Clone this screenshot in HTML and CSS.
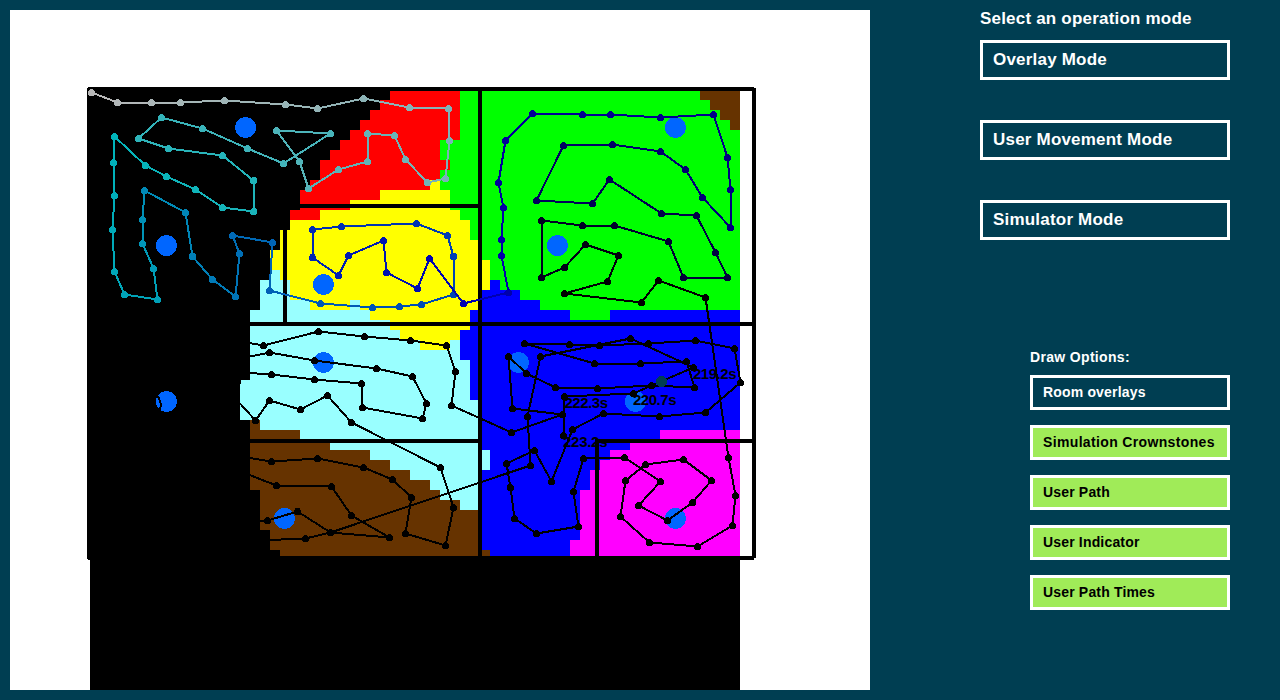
FILE: index.html
```html
<!DOCTYPE html>
<html lang="en">
<head>
<meta charset="utf-8">
<title>Simulator</title>
<link rel="stylesheet" href="styles.css">
</head>
<body>
<main class="app">
  <svg class="map" viewBox="10 10 860 680" width="860" height="680">
    <g class="rooms">
      <path class="void" d="M90 90H740V690H90Z"/>
      <path class="red" d="M390 90H460V140H440V160H450V170H440V180H430V190H380V200H350V210H320V220H290V210H300V190H310V180H320V160H330V150H340V140H350V130H360V120H370V110H380V100H390Z"/>
      <path class="green" d="M460 90H740V310H610V320H570V310H540V300H520V290H500V280H490V260H480V240H470V220H460V210H450V190H440V170H450V160H440V140H460Z"/>
      <path class="brown" d="M700 90H740V130H730V120H720V110H710V100H700Z"/>
      <path class="blue" d="M480 290H490V280H500V290H520V300H540V310H570V320H610V310H740V557H480V400H470V360H460V330H470V310H480Z"/>
      <path class="yellow" d="M430 180H440V190H450V210H460V220H470V240H480V260H490V290H480V310H470V330H460V340H450V350H420V340H400V330H390V320H370V310H360V300H350V310H310V300H290V280H280V270H270V250H280V230H290V220H320V210H350V200H380V190H430Z"/>
      <path class="cyan" d="M270 270H280V280H290V300H310V310H350V300H360V310H370V320H390V330H400V340H420V350H450V340H460V360H470V400H480V557H250V420H240V380H250V310H260V280H270Z"/>
      <path class="brown" d="M250 420H260V430H300V440H330V450H370V460H390V470H410V480H430V490H440V500H460V510H480V557H280V550H270V530H260V490H250Z"/>
      <path class="void" d="M240 490H260V530H270V550H280V557H240Z"/>
      <path class="magenta" d="M660 430H740V557H570V540H580V490H590V470H600V460H610V450H630V440H660Z"/>
      <path class="cyan" d="M480 450H490V470H480Z"/>
      <path class="brown" d="M480 550H490V557H480Z"/>
    </g>
    <path class="walls" d="M88 89H754M89 88V559M88 558H754M754 88V558M480 89V558M285 206H480M285 206V324M89 324H754M89 441H480M597 439V558M597 441H754"/>
    <g class="crownstones">
      <circle cx="245.5" cy="127.5" r="10.5"/><circle cx="675.5" cy="127.5" r="10.5"/>
      <circle cx="166.5" cy="245.5" r="10.5"/><circle cx="557.5" cy="245.5" r="10.5"/>
      <circle cx="323.5" cy="284.5" r="10.5"/><circle cx="323.5" cy="362.5" r="10.5"/>
      <circle cx="518.5" cy="362.5" r="10.5"/><circle cx="635.5" cy="401.5" r="10.5"/>
      <circle cx="166.5" cy="401.5" r="10.5"/><circle cx="284.5" cy="518.5" r="10.5"/>
      <circle cx="675.5" cy="518.5" r="10.5"/>
    </g>
    <path class="hidden-path" d="M158 396L161 404L160 411"/>
    <g id="trail" class="trail"></g>
    <circle class="indicator" cx="661.5" cy="381.5" r="5.5"/>
    <g class="times">
      <text x="693" y="379" textLength="43.5">219.2s</text>
      <text x="633" y="405" textLength="43.5">220.7s</text>
      <text x="564.5" y="408" textLength="43.5">222.3s</text>
      <text x="563" y="447" textLength="44.5">223.2s</text>
    </g>
  </svg>
  <aside class="sidebar">
    <h1 class="title">Select an operation mode</h1>
    <div class="modes">
      <button class="button mode">Overlay Mode</button>
      <button class="button mode">User Movement Mode</button>
      <button class="button mode">Simulator Mode</button>
    </div>
    <section class="options">
      <h2 class="subtitle">Draw Options:</h2>
      <button class="button option">Room overlays</button>
      <button class="button option active wide">Simulation Crownstones</button>
      <button class="button option active">User Path</button>
      <button class="button option active">User Indicator</button>
      <button class="button option active">User Path Times</button>
    </section>
  </aside>
</main>
<script src="trail.js"></script>
</body>
</html>
```
FILE: styles.css
```css
body {
  margin: 0;
  background: #003e52;
  font-family: "Liberation Sans", Arial, sans-serif;
  font-weight: bold;
}

.app {
  box-sizing: border-box;
  display: flex;
  gap: 110px;
  width: 1280px;
  height: 700px;
  padding: 10px;
  overflow: hidden;
}

.map {
  flex: none;
  background: #fff;
  shape-rendering: crispEdges;
}

.void { fill: #000; }
.red { fill: #f00; }
.green { fill: #0f0; }
.blue { fill: #00f; }
.yellow { fill: #ff0; }
.cyan { fill: #9ff; }
.brown { fill: #630; }
.magenta { fill: #f0f; }

.walls {
  fill: none;
  stroke: #000;
  stroke-width: 4;
}

.crownstones { fill: #06f; }
.indicator { fill: #003e52; }

.trail line { stroke-width: 2; }
.hidden-path { fill: none; stroke: #000; stroke-width: 2; }

.times {
  font-size: 15px;
  fill: #000;
}

.sidebar {
  width: 250px;
  color: #fff;
}

.title {
  margin: 0;
  height: 30px;
  font-size: 17px;
  line-height: 17px;
  letter-spacing: 0.2px;
  white-space: nowrap;
}

.modes {
  display: flex;
  flex-direction: column;
  gap: 40px;
}

.button {
  box-sizing: border-box;
  display: block;
  padding: 0 10px;
  border: 3px solid #fff;
  border-radius: 0;
  background: #003e52;
  color: #fff;
  font-family: inherit;
  font-weight: bold;
  text-align: left;
  white-space: nowrap;
}

.mode {
  height: 40px;
  font-size: 17px;
  letter-spacing: 0.2px;
}

.options {
  display: flex;
  flex-direction: column;
  gap: 15px;
  margin: 110px 0 0 50px;
}

.subtitle {
  margin: 0 0 -5px;
  font-size: 14px;
  line-height: 15px;
  letter-spacing: 0.33px;
}

.option {
  height: 35px;
  padding-bottom: 2px;
  font-size: 14px;
  letter-spacing: 0.17px;
}

.wide { letter-spacing: 0.35px; }

.active {
  background: #a0eb58;
  color: #000;
}
```
FILE: trail.js
```js
// Each run is a walked route; a third value sets the colour at that point,
// and colours between two such points are blended.
const runs = [
  [
    [91,92,[184,184,184]],[117,102],[151,102],[180,102],[224,100],[285,104],[317,108],[363,98],[409,107],
    [448,108,[128,178,182]],[449,140],[445,178],[427,182],[405,159],[394,135],[367,133],[367,161],[338,169],
    [308,188],[299,161],[276,130],[330,133,[72,180,186]],[283,163],[247,148],[202,128],[161,117],[138,138],
    [168,148],[222,155],[253,180],[253,211],[222,207],[195,189],[166,176],[145,165],
    [114,136,[0,180,186]],[113,162],[114,195],[112,229],[114,271],[124,294],[157,299,[0,160,184]],[153,268],
    [142,243],[142,219],[144,190],[185,212],[192,256],[212,279],[235,296],[239,253],[232,235],
    [272,242,[0,100,182]],[269,290],[320,303],[372,307],[399,306],[421,304],[453,294],[453,256],[447,235],
    [416,223],[341,226],[312,229],[312,257],[338,275],[348,255],[383,240],[386,272],[417,288],[429,258],
    [463,303,[0,0,176]],[508,292],[501,255],[501,239],[503,207],[498,182],[505,140],[532,113],[582,114],
    [610,114],[660,117],[713,114],[727,157],[730,189],[730,227,[0,0,124]],[702,197],[685,169],[660,151],
    [612,144],[563,145],[536,200],[592,203],[609,179],[661,213],[696,215],[715,252],[727,277],[683,277],
    [668,241],[614,225],[582,225],[541,220],[541,277],[564,267],[585,244],[618,255],[607,281],
    [564,293,[0,0,0]],[641,302],[658,280],[705,297],[728,457],[735,495],[732,525],[697,546],[649,542],
    [620,516],[625,480],[645,464],[683,459],[711,480],[692,502],[667,520],[638,505],[660,481],[624,457],
    [583,458],[573,491],[578,526],[536,533],[514,518],[510,487],[506,463],[534,450],[551,481],[572,429],
    [603,413],[659,416],[705,412],[740,382],[734,348],[695,340],[648,343],[599,345],[569,344],[524,343],
    [594,363],[640,363],[686,361],[694,387],[651,385],[597,388],[555,387],[526,373],[508,356],[512,408],
    [562,414],[511,432],[451,405],[455,371],[446,345],[410,340],[364,336],[318,331],[263,345],[240,341],
    [240,358],[269,352],[314,360],[376,368],[412,376],[426,403],[422,418],[362,407],[361,383],[314,379],
    [271,374],[242,372],[235,398],[255,420],[269,400],[300,409],[327,395],[351,422],[440,467],[453,507],
    [445,545],[405,533],[411,497],[392,479],[363,467],[317,458],[271,461],[240,456],[240,471],[276,485],
    [331,486],[351,515],[389,537],[330,532],[297,511],[267,520],[256,520],[256,540],[305,538],[330,532],
    [530,465],[527,416],[540,356],[630,338],[693,367],[651,385],[633,393],[564,396],[563,435,[0,0,0]]
  ]
];

const trail = document.getElementById("trail");

function add(name, attributes) {
  const node = document.createElementNS("http://www.w3.org/2000/svg", name);
  for (const key in attributes) node.setAttribute(key, attributes[key]);
  trail.appendChild(node);
}

function colourAt(points, i) {
  let a = i, b = i;
  while (!points[a][2]) a--;
  while (!points[b][2]) b++;
  const t = a === b ? 0 : (i - a) / (b - a);
  const mix = points[a][2].map((v, k) => Math.round(v + (points[b][2][k] - v) * t));
  return `rgb(${mix})`;
}

for (const points of runs) {
  points.forEach(([x, y], i) => {
    const colour = colourAt(points, i);
    if (i + 1 < points.length) {
      const [nx, ny] = points[i + 1];
      add("line", { x1: x + 0.5, y1: y + 0.5, x2: nx + 0.5, y2: ny + 0.5, stroke: colour });
    }
    add("circle", { cx: x + 0.5, cy: y + 0.5, r: 3.5, fill: colour });
  });
}
```
